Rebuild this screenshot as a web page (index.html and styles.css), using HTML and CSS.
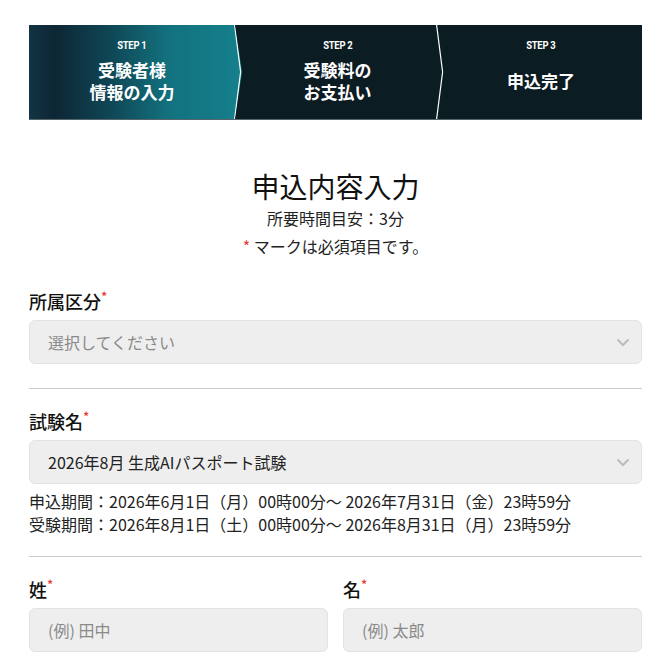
FILE: index.html
```html
<!DOCTYPE html>
<html lang="ja">
<head>
<meta charset="utf-8">
<link rel="stylesheet" href="styles.css">
</head>
<body>
<div class="page">
  <div class="steps">
    <div class="step step-active">
      <div class="step-no">STEP 1</div>
      <div class="step-title">受験者様<br>情報の入力</div>
      <svg class="sep" viewBox="0 0 8 94" preserveAspectRatio="none"><polyline points="0.6,0 6.6,47 0.6,94" fill="none" stroke="#ffffff" stroke-width="1.2"/></svg>
    </div>
    <div class="step">
      <div class="step-no">STEP 2</div>
      <div class="step-title">受験料の<br>お支払い</div>
      <svg class="sep" viewBox="0 0 8 94" preserveAspectRatio="none"><polyline points="0.6,0 6.6,47 0.6,94" fill="none" stroke="#ffffff" stroke-width="1.2"/></svg>
    </div>
    <div class="step">
      <div class="step-no">STEP 3</div>
      <div class="step-title">申込完了</div>
    </div>
  </div>

  <div class="intro">
    <h1 class="title">申込内容入力</h1>
    <p class="sub">所要時間目安：3分</p>
    <p class="sub"><span class="req-inline">*</span> マークは必須項目です。</p>
  </div>

  <div class="section section-first">
    <div class="label">所属区分<span class="req">*</span></div>
    <div class="select">
      <span class="placeholder">選択してください</span>
      <svg class="chev" viewBox="0 0 14 9"><polyline points="1.5,1.5 7,7 12.5,1.5" fill="none" stroke="#bdbdbd" stroke-width="2.2"/></svg>
    </div>
  </div>

  <div class="section section-info">
    <div class="label">試験名<span class="req">*</span></div>
    <div class="select">
      <span class="value">2026年8月 生成AIパスポート試験</span>
      <svg class="chev" viewBox="0 0 14 9"><polyline points="1.5,1.5 7,7 12.5,1.5" fill="none" stroke="#bdbdbd" stroke-width="2.2"/></svg>
    </div>
    <div class="info">
      <p>申込期間：2026年6月1日（月）00時00分～ 2026年7月31日（金）23時59分</p>
      <p>受験期間：2026年8月1日（土）00時00分～ 2026年8月31日（月）23時59分</p>
    </div>
  </div>

  <div class="name-row">
    <div class="name-col">
      <div class="label">姓<span class="req">*</span></div>
      <div class="input"><span class="placeholder">(例) 田中</span></div>
    </div>
    <div class="name-col">
      <div class="label">名<span class="req">*</span></div>
      <div class="input"><span class="placeholder">(例) 太郎</span></div>
    </div>
  </div>
</div>
</body>
</html>
```

FILE: styles.css
```css
* { box-sizing: border-box; }
html, body { margin: 0; padding: 0; background: #ffffff; }
body {
  font-family: "Noto Sans CJK JP", "Noto Sans", sans-serif;
  color: #1a1a1a;
}
p { margin: 0; }
.page {
  padding: 25px 28px 0 29px;
}

/* steps */
.steps {
  display: grid;
  grid-template-columns: 206px 205px 202px;
  height: 95px;
  background: #0c1c23;
  border-bottom: 1px solid #56666c;
}
.step {
  position: relative;
  display: flex;
  flex-direction: column;
  align-items: center;
  padding: 13px 0 9px;
  color: #ffffff;
}
.step-active {
  margin-right: -7px;
  padding-right: 7px;
  z-index: 1;
  background: linear-gradient(90deg, #123444 0%, #0d2634 12%, #0f4655 38%, #13717e 65%, #15808c 100%);
  clip-path: polygon(0 0, calc(100% - 7px) 0, 100% 50%, calc(100% - 7px) 100%, 0 100%);
}
.step-no {
  font-family: "Roboto", "Liberation Sans", sans-serif;
  font-weight: 700;
  font-size: 11.5px;
  line-height: 14px;
  letter-spacing: -0.3px;
  transform: scaleX(0.82);
}
.step-title {
  flex: 1;
  display: flex;
  align-items: center;
  text-align: center;
  font-weight: 700;
  font-size: 17px;
  line-height: 22px;
}
.sep {
  position: absolute;
  top: 0;
  right: -4px;
  width: 8px;
  height: 94px;
  z-index: 2;
}
.step-active .sep { right: 0px; }

/* intro */
.intro {
  text-align: center;
  padding-top: 48px;
}
.title {
  margin: 0;
  font-size: 28px;
  font-weight: 400;
  line-height: 36px;
  color: #111;
}
.sub {
  font-size: 16px;
  line-height: 28px;
  color: #222;
}
.req-inline { color: #e53935; }

/* form sections */
.section {
  border-bottom: 1px solid #cccccc;
  padding: 20px 0 24px;
}
.section-first { padding-top: 29px; }
.section-info { padding-bottom: 20px; }
.label {
  font-size: 18px;
  font-weight: 500;
  line-height: 24px;
  color: #111;
  margin-bottom: 7px;
}
.req {
  color: #e53935;
  font-size: 13px;
  vertical-align: top;
  line-height: 16px;
}
.select, .input {
  height: 44px;
  background: #eeeeee;
  border: 1px solid #e3e3e3;
  border-radius: 6px;
  display: flex;
  align-items: center;
  justify-content: space-between;
  padding: 0 11px 0 18px;
  font-size: 16px;
}
.placeholder { color: #8a8a8a; }
.value { color: #222; }
.chev { width: 14px; height: 9px; margin-top: 1px; }
.info {
  margin-top: 6px;
  font-size: 16px;
  line-height: 23px;
  color: #222;
}

.name-row {
  display: grid;
  grid-template-columns: 1fr 1fr;
  gap: 15px;
  padding-top: 20px;
}
```
